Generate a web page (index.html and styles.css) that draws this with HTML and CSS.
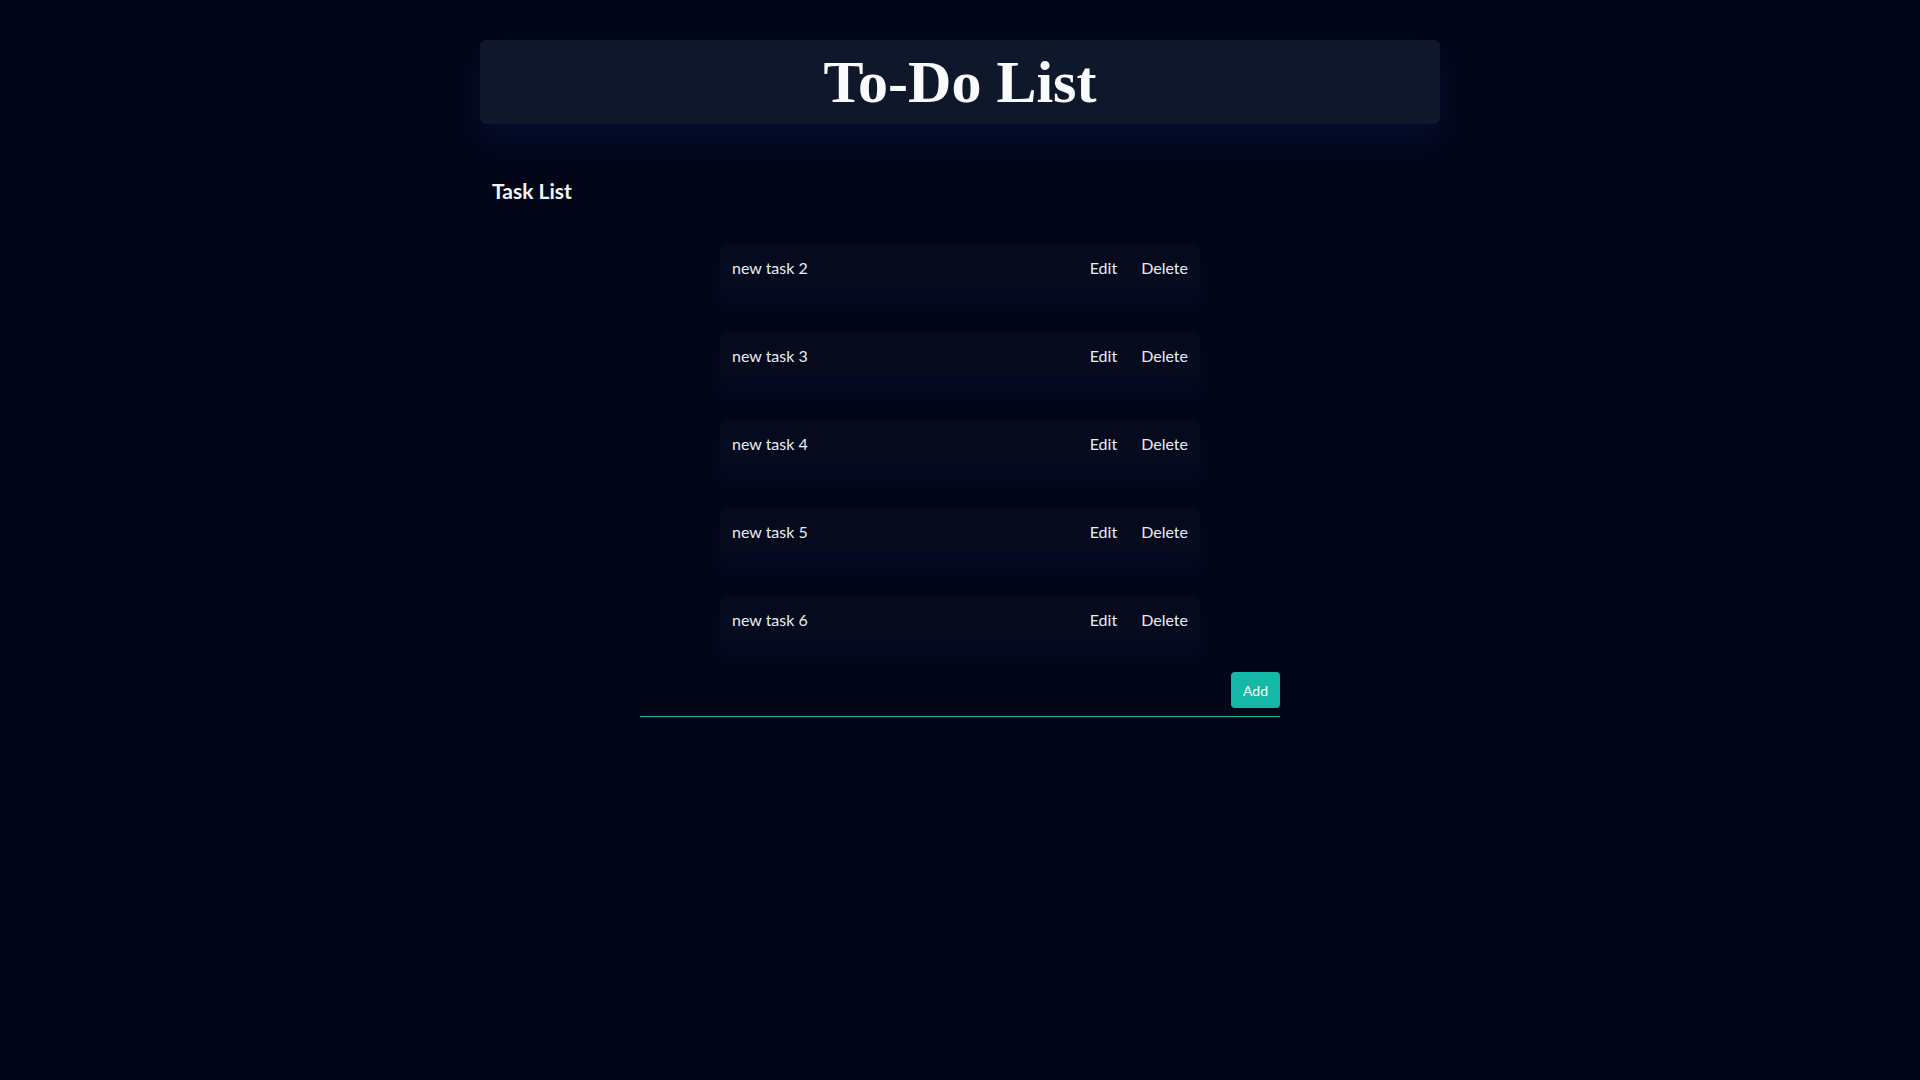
FILE: index.html
```html
<!DOCTYPE html>
<html lang="en">
<head>
<meta charset="utf-8">
<title>To-Do List</title>
<link rel="stylesheet" href="styles.css">
</head>
<body>
<div class="app">
  <header class="app-header">
    <h1 class="app-title">To-Do List</h1>
  </header>
  <section class="tasks">
    <h2 class="tasks-title">Task List</h2>
    <ul class="task-list">
      <li class="task"><span class="task-name">new task 2</span><span class="task-actions"><button class="task-btn">Edit</button><button class="task-btn">Delete</button></span></li>
      <li class="task"><span class="task-name">new task 3</span><span class="task-actions"><button class="task-btn">Edit</button><button class="task-btn">Delete</button></span></li>
      <li class="task"><span class="task-name">new task 4</span><span class="task-actions"><button class="task-btn">Edit</button><button class="task-btn">Delete</button></span></li>
      <li class="task"><span class="task-name">new task 5</span><span class="task-actions"><button class="task-btn">Edit</button><button class="task-btn">Delete</button></span></li>
      <li class="task"><span class="task-name">new task 6</span><span class="task-actions"><button class="task-btn">Edit</button><button class="task-btn">Delete</button></span></li>
    </ul>
    <form class="add-form">
      <input class="add-input" type="text" aria-label="New task">
      <button class="add-btn" type="button">Add</button>
    </form>
  </section>
</div>
</body>
</html>
```
FILE: styles.css
```css
* { box-sizing: border-box; }
html, body { margin: 0; padding: 0; }
body {
  background: #020617;
  color: #e2e8f0;
  font-family: Lato, "Noto Sans", sans-serif;
  min-height: 1080px;
}
.app {
  width: 960px;
  margin: 0 auto;
  padding-top: 40px;
}
.app-header {
  height: 84px;
  background: #0f172a;
  border-radius: 6px;
  display: flex;
  align-items: center;
  justify-content: center;
  box-shadow: 0 16px 34px rgba(20, 30, 110, 0.32);
}
.app-title {
  margin: 0;
  font-family: "Liberation Serif", serif;
  font-weight: bold;
  font-size: 60px;
  line-height: 1;
  color: #f8fafc;
}
.tasks { padding: 0 12px; }
.tasks-title {
  margin: 55px 0 0;
  font-size: 21px;
  line-height: 24px;
  font-weight: bold;
  color: #f1f5f9;
}
.task-list {
  list-style: none;
  margin: 41px auto 0;
  padding: 0;
  width: 480px;
  display: flex;
  flex-direction: column;
  gap: 40px;
}
.task {
  height: 48px;
  display: flex;
  align-items: center;
  justify-content: space-between;
  padding: 0 12px 2px;
  background: #050a1c;
  border-radius: 6px;
  box-shadow: 0 14px 22px rgba(20, 30, 90, 0.22);
  font-size: 16px;
}
.task-actions { display: flex; gap: 24px; }
.task-btn {
  background: none;
  border: 0;
  padding: 0;
  font: inherit;
  color: #e8edf4;
}
.task-name { color: #e8edf4; }
.add-form {
  width: 640px;
  margin: 28px auto 0;
  display: flex;
  align-items: center;
  border-bottom: 1px solid #14b8a6;
  padding-bottom: 8px;
}
.add-input {
  flex: 1;
  background: transparent;
  border: 0;
  outline: none;
  height: 36px;
  color: #e2e8f0;
  font: inherit;
}
.add-btn {
  width: 49px;
  height: 36px;
  background: #14b8a6;
  border: 0;
  border-radius: 4px;
  color: #ffffff;
  font-family: inherit;
  font-size: 14px;
  padding: 0;
}
```
